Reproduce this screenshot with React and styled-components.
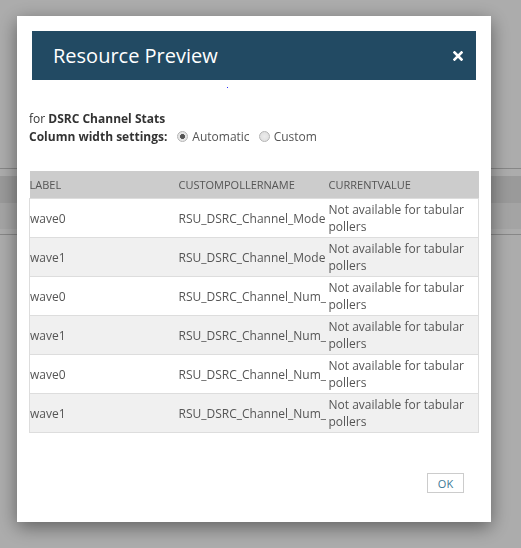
import React from 'react';
import styled, { createGlobalStyle } from 'styled-components';

const GlobalStyle = createGlobalStyle`
  html, body {
    margin: 0;
    padding: 0;
    background: #ffffff;
    font-family: "Open Sans", "Liberation Sans", Arial, sans-serif;
  }
`;

const Page = styled.div`
  width: 521px;
  height: 548px;
  padding-top: 168px;
  box-sizing: border-box;
  overflow: hidden;
`;

const PageLine = styled.div`
  height: 1px;
  background: #c8c8c8;
  margin-bottom: ${({ $gap }) => $gap}px;
`;

const PageBand = styled.div`
  height: ${({ $h }) => $h}px;
  background: ${({ $color }) => $color};
`;

const Overlay = styled.div`
  position: fixed;
  inset: 0;
  background: rgba(0, 0, 0, 0.325);
  padding: 16px 0 0 17px;
  box-sizing: border-box;
`;

const Modal = styled.div`
  width: 474px;
  height: 506px;
  background: #ffffff;
  box-shadow: 0 5px 18px rgba(0, 0, 0, 0.45);
  padding: 15px 12px 0;
  box-sizing: border-box;
  display: flex;
  flex-direction: column;
`;

const Header = styled.div`
  height: 49px;
  margin: 0 3px;
  background: #224a63;
  display: flex;
  align-items: center;
  justify-content: space-between;
  padding: 0 13px 0 21px;
  box-sizing: border-box;
`;

const Title = styled.h2`
  margin: 0;
  color: #ffffff;
  font-size: 20px;
  font-weight: 400;
  line-height: 1;
`;

const CloseButton = styled.button`
  border: 0;
  background: none;
  padding: 0;
  width: 10px;
  height: 10px;
  display: flex;
  cursor: pointer;
`;

const Dot = styled.div`
  width: 1px;
  height: 1px;
  background: #2a2aff;
  margin: 7px 0 0 198px;
`;

const Intro = styled.div`
  margin-top: 22px;
  font-size: 12px;
  line-height: 18px;
  color: #333333;
`;

const Strong = styled.b`
  font-weight: 700;
`;

const SettingsRow = styled.div`
  display: flex;
  align-items: center;
`;

const RadioLabel = styled.label`
  display: inline-flex;
  align-items: center;
  gap: 4px;
  margin-left: ${({ $first }) => ($first ? '10px' : '9px')};
  color: #555555;
`;

const Radio = styled.span`
  width: 11px;
  height: 11px;
  border-radius: 50%;
  border: 1px solid #b4b4b4;
  background: ${({ $checked }) =>
    $checked
      ? 'radial-gradient(circle, #555 0 2.2px, #e6e6e6 2.8px)'
      : 'radial-gradient(circle, #ececec 0, #dcdcdc 100%)'};
  box-sizing: border-box;
  margin-top: -2px;
`;

const Table = styled.table`
  margin-top: 25px;
  width: 450px;
  table-layout: fixed;
  border-collapse: collapse;
  font-size: 12px;
  color: #555555;
`;

const HeadCell = styled.th`
  height: 27px;
  background: #cccccc;
  text-align: left;
  font-weight: 400;
  font-size: 11px;
  padding: 0;
  width: ${({ $w }) => ($w ? `${$w}px` : 'auto')};
`;

const Row = styled.tr`
  background: ${({ $alt }) => ($alt ? '#f0f0f0' : '#ffffff')};
  border: 1px solid #dddddd;
`;

const Cell = styled.td`
  height: 38px;
  padding: 0;
  line-height: 17px;
  white-space: ${({ $wrap }) => ($wrap ? 'normal' : 'nowrap')};
  overflow: hidden;
  vertical-align: middle;
`;

const Footer = styled.div`
  margin-top: 40px;
  display: flex;
  justify-content: flex-end;
  padding-right: 15px;
`;

const OkButton = styled.button`
  width: 37px;
  height: 20px;
  border: 1px solid #cccccc;
  background: #ffffff;
  color: #3b7896;
  font-family: inherit;
  font-size: 11px;
  padding: 0;
  cursor: pointer;
`;

const rows = [
  ['wave0', 'RSU_DSRC_Channel_Mode'],
  ['wave1', 'RSU_DSRC_Channel_Mode'],
  ['wave0', 'RSU_DSRC_Channel_Num_'],
  ['wave1', 'RSU_DSRC_Channel_Num_'],
  ['wave0', 'RSU_DSRC_Channel_Num_'],
  ['wave1', 'RSU_DSRC_Channel_Num_'],
];

const App = () => {
  return (
    <>
      <GlobalStyle />
      <Page>
        <PageLine $gap={7} />
        <PageBand $h={27} $color="#e4e4e4" />
        <PageBand $h={26} $color="#f4f4f4" />
        <PageBand $h={5} $color="#ffffff" />
        <PageLine $gap={0} />
      </Page>
      <Overlay>
        <Modal>
          <Header>
            <Title>Resource Preview</Title>
            <CloseButton aria-label="Close">
              <svg width="10" height="10" viewBox="0 0 10 10">
                <path d="M1.5 1.5 L8.5 8.5 M8.5 1.5 L1.5 8.5" stroke="#fff" strokeWidth="2.6" strokeLinecap="square" />
              </svg>
            </CloseButton>
          </Header>
          <Dot />
          <Intro>
            <div>
              for <Strong>DSRC Channel Stats</Strong>
            </div>
            <SettingsRow>
              <Strong>Column width settings:</Strong>
              <RadioLabel $first>
                <Radio $checked />
                Automatic
              </RadioLabel>
              <RadioLabel>
                <Radio />
                Custom
              </RadioLabel>
            </SettingsRow>
          </Intro>
          <Table>
            <thead>
              <tr>
                <HeadCell $w={149}>LABEL</HeadCell>
                <HeadCell $w={150}>CUSTOMPOLLERNAME</HeadCell>
                <HeadCell>CURRENTVALUE</HeadCell>
              </tr>
            </thead>
            <tbody>
              {rows.map(([label, name], index) => (
                <Row key={index} $alt={index % 2 === 1}>
                  <Cell>{label}</Cell>
                  <Cell>{name}</Cell>
                  <Cell $wrap>Not available for tabular pollers</Cell>
                </Row>
              ))}
            </tbody>
          </Table>
          <Footer>
            <OkButton>OK</OkButton>
          </Footer>
        </Modal>
      </Overlay>
    </>
  );
};

export default App;
